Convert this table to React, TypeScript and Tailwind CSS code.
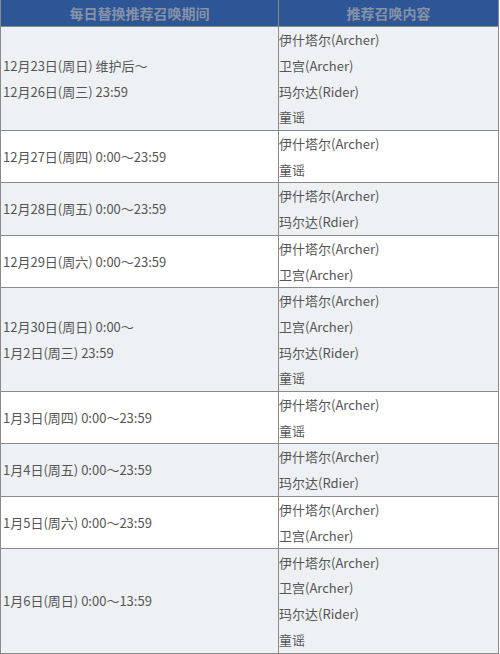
import React from 'react';

type Row = { period: string[]; items: string[]; h: string; shaded: boolean };

const rows: Row[] = [
  { period: ['12月23日(周日) 维护后～', '12月26日(周三) 23:59'], items: ['伊什塔尔(Archer)', '卫宫(Archer)', '玛尔达(Rider)', '童谣'], h: 'h-[104px]', shaded: true },
  { period: ['12月27日(周四) 0:00～23:59'], items: ['伊什塔尔(Archer)', '童谣'], h: 'h-[52px]', shaded: false },
  { period: ['12月28日(周五) 0:00～23:59'], items: ['伊什塔尔(Archer)', '玛尔达(Rdier)'], h: 'h-[53px]', shaded: true },
  { period: ['12月29日(周六) 0:00～23:59'], items: ['伊什塔尔(Archer)', '卫宫(Archer)'], h: 'h-[52px]', shaded: false },
  { period: ['12月30日(周日) 0:00～', '1月2日(周三) 23:59'], items: ['伊什塔尔(Archer)', '卫宫(Archer)', '玛尔达(Rider)', '童谣'], h: 'h-[104px]', shaded: true },
  { period: ['1月3日(周四) 0:00～23:59'], items: ['伊什塔尔(Archer)', '童谣'], h: 'h-[52px]', shaded: false },
  { period: ['1月4日(周五) 0:00～23:59'], items: ['伊什塔尔(Archer)', '玛尔达(Rdier)'], h: 'h-[53px]', shaded: true },
  { period: ['1月5日(周六) 0:00～23:59'], items: ['伊什塔尔(Archer)', '卫宫(Archer)'], h: 'h-[52px]', shaded: false },
  { period: ['1月6日(周日) 0:00～13:59'], items: ['伊什塔尔(Archer)', '卫宫(Archer)', '玛尔达(Rider)', '童谣'], h: 'h-[104px]', shaded: true },
];

export default function App() {
  return (
    <div className="w-[500px] h-[654px] bg-white font-['Noto_Sans_CJK_SC','Noto_Sans',sans-serif] text-[13px] text-[#555555]">
      <div className="w-[499px] border-x border-b border-[#8a8a8a]">
        <div className="flex h-[27px] bg-[#2e5596] border-b border-[#8a8a8a] text-[14px] font-bold text-[#8592a8]">
          <div className="w-[278px] border-r border-[#8a8a8a] flex items-center justify-center">每日替换推荐召唤期间</div>
          <div className="flex-1 flex items-center justify-center">推荐召唤内容</div>
        </div>
        {rows.map((r, i) => (
          <div
            key={i}
            className={`flex ${r.h} ${i < rows.length - 1 ? 'border-b border-[#8a8a8a]' : ''} ${r.shaded ? 'bg-[#edf1f4]' : 'bg-white'}`}
          >
            <div className="w-[278px] border-r border-[#8a8a8a] flex flex-col justify-center pl-[2px] leading-[25.7px]">
              {r.period.map((p) => (
                <div key={p} className="whitespace-nowrap">{p}</div>
              ))}
            </div>
            <div className="flex-1 flex flex-col justify-center leading-[25.7px]">
              {r.items.map((t, j) => (
                <div key={j} className="whitespace-nowrap">{t}</div>
              ))}
            </div>
          </div>
        ))}
      </div>
    </div>
  );
}
